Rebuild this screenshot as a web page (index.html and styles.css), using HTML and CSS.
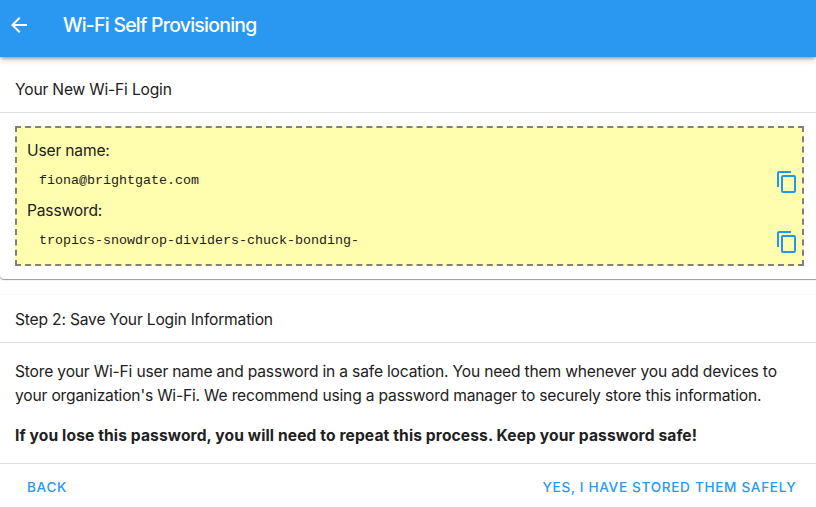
FILE: index.html
```html
<!DOCTYPE html>
<html lang="en">
<head>
<meta charset="utf-8">
<title>Wi-Fi Self Provisioning</title>
<link rel="stylesheet" href="styles.css">
</head>
<body>
<header class="bar">
  <svg class="back-icon" viewBox="0 0 24 24"><path d="M20 11H7.83l5.59-5.59L12 4l-8 8 8 8 1.41-1.41L7.83 13H20v-2z"/></svg>
  <h1>Wi-Fi Self Provisioning</h1>
</header>
<main>
  <section class="card login">
    <h2>Your New Wi-Fi Login</h2>
    <div class="body">
      <div class="credentials">
        <div class="label">User name:</div>
        <div class="value"><code>fiona@brightgate.com</code><svg class="copy" viewBox="0 0 24 24"><path d="M16 1H4c-1.1 0-2 .9-2 2v14h2V3h12V1zm3 4H8c-1.1 0-2 .9-2 2v14c0 1.1.9 2 2 2h11c1.1 0 2-.9 2-2V7c0-1.1-.9-2-2-2zm0 16H8V7h11v14z"/></svg></div>
        <div class="label">Password:</div>
        <div class="value"><code>tropics-snowdrop-dividers-chuck-bonding-</code><svg class="copy" viewBox="0 0 24 24"><path d="M16 1H4c-1.1 0-2 .9-2 2v14h2V3h12V1zm3 4H8c-1.1 0-2 .9-2 2v14c0 1.1.9 2 2 2h11c1.1 0 2-.9 2-2V7c0-1.1-.9-2-2-2zm0 16H8V7h11v14z"/></svg></div>
      </div>
    </div>
  </section>
  <section class="card step">
    <h2>Step 2: Save Your Login Information</h2>
    <div class="copytext">
      <p>Store your Wi-Fi user name and password in a safe location. You need them whenever you add devices to<br>your organization's Wi-Fi. We recommend using a password manager to securely store this information.</p>
      <p class="warning">If you lose this password, you will need to repeat this process. Keep your password safe!</p>
    </div>
    <footer><a>BACK</a><a>YES, I HAVE STORED THEM SAFELY</a></footer>
  </section>
</main>
</body>
</html>
```
FILE: styles.css
```css
* { box-sizing: border-box; }
body { margin: 0; height: 507px; overflow: hidden; background: #fefefe; color: #212121; font: 15.6px/24px Inter, sans-serif; letter-spacing: -.175px; white-space: nowrap; }
h1, h2, p { margin: 0; font-weight: 400; }
.bar { position: relative; z-index: 1; height: 57px; padding: 0 7px 7px; display: flex; align-items: center; gap: 32px; background: #2a98f0; color: #fff; box-shadow: 0 2px 4px -1px rgba(0,0,0,.4), 0 3px 7px rgba(0,0,0,.12); }
.back-icon { width: 24px; height: 24px; fill: currentColor; }
.bar h1 { font-size: 19.4px; font-weight: 500; letter-spacing: -.73px; }
.card { background: #fff; }
.login { height: 222px; border-radius: 0 0 0 4px; box-shadow: 0 1px 1px #999; }
.card h2 { height: 56px; padding: 21px 15px 10px; border-bottom: 1px solid #e0e0e0; font-size: 15.6px; line-height: 24px; letter-spacing: -.18px; }
.body { padding: 13px 12px 0 15px; }
.credentials { height: 140px; border: 2px dashed #808080; background: #fffdae; padding: 11px 3px 7px 10px; }
.label { height: 24px; }
.value { height: 36px; padding-left: 12px; display: flex; align-items: center; justify-content: space-between; }
code { font: 13.33px/20px "Liberation Mono", monospace; letter-spacing: 0; }
.copy { width: 24px; height: 24px; margin-top: 2px; fill: #2196f3; }
.step { margin-top: 15px; border-top: 1px solid #fafafa; }
.card.step h2 { height: 48px; padding-top: 13px; }
.copytext { height: 121px; padding: 17px 15px 0; border-bottom: 1px solid #e0e0e0; }
.warning { margin-top: 16px; font-weight: 700; letter-spacing: .11px; }
footer { display: flex; justify-content: space-between; padding: 11px 19.5px 0 27px; color: #2a98f0; font-size: 13.6px; font-weight: 500; letter-spacing: .67px; }
```
